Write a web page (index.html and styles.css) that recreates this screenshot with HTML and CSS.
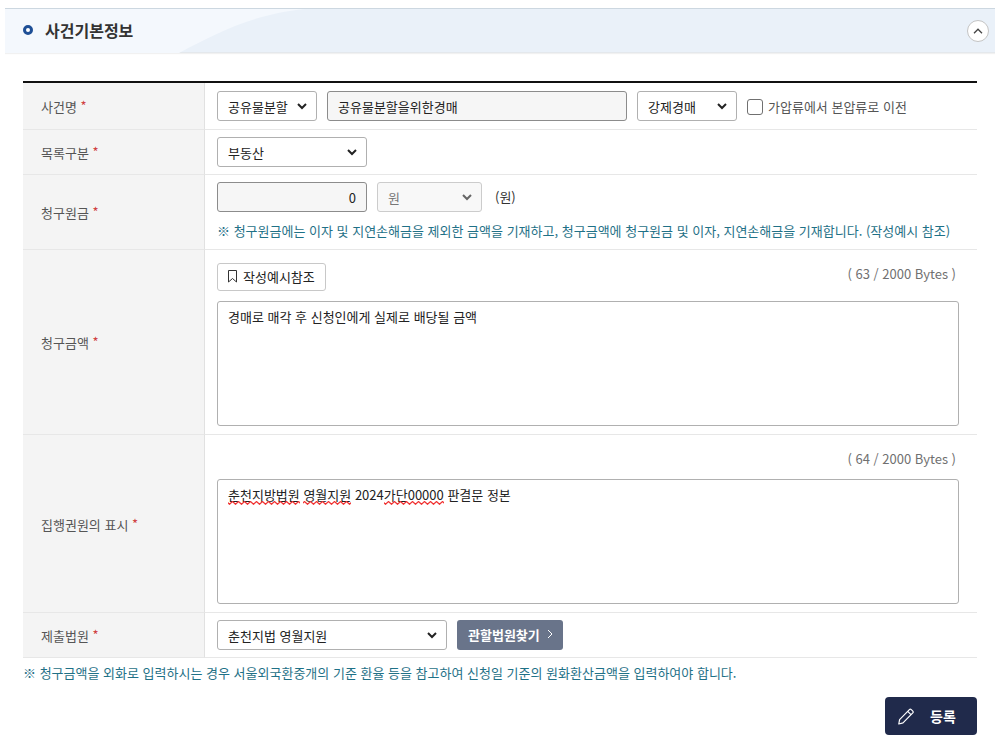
FILE: index.html
```html
<!DOCTYPE html>
<html lang="ko">
<head>
    <meta charset="UTF-8">
    <meta name="viewport" content="width=device-width, initial-scale=1.0">
    <title>사건기본정보</title>
    <link rel="stylesheet" href="styles.css">
</head>
<body>
    <section class="panel">
        <header class="panel-head">
            <svg class="panel-curve" width="300" height="44" viewBox="0 0 300 44" aria-hidden="true">
                <path d="M0 0H300C250 5 215 22 174 44H0Z" fill="#f4f8fd"/>
            </svg>
            <h2 class="panel-title">사건기본정보</h2>
            <button type="button" class="btn-fold" aria-label="접기">
                <svg width="10" height="6" viewBox="0 0 10 6"><path d="M1 5.2L5 1.2L9 5.2" fill="none" stroke="#444" stroke-width="1.3"/></svg>
            </button>
        </header>

        <form class="panel-body">
            <table class="form-table">
                <tr>
                    <th scope="row"><label for="case-type">사건명</label> <span class="req">*</span></th>
                    <td>
                        <div class="row">
                            <select id="case-type" class="w-100"><option>공유물분할</option></select>
                            <input type="text" class="w-300" value="공유물분할을위한경매" aria-label="사건명" readonly>
                            <select class="w-100" aria-label="경매구분"><option>강제경매</option></select>
                            <label class="check"><input type="checkbox">가압류에서 본압류로 이전</label>
                        </div>
                    </td>
                </tr>
                <tr>
                    <th scope="row"><label for="list-type">목록구분</label> <span class="req">*</span></th>
                    <td>
                        <div class="row">
                            <select id="list-type" class="w-150"><option>부동산</option></select>
                        </div>
                    </td>
                </tr>
                <tr>
                    <th scope="row"><label for="principal">청구원금</label> <span class="req">*</span></th>
                    <td>
                        <div class="row">
                            <input type="text" id="principal" class="w-150 num" value="0" readonly>
                            <select class="w-105" aria-label="통화" disabled><option>원</option></select>
                            <span class="unit">(원)</span>
                        </div>
                        <p class="note">※ 청구원금에는 이자 및 지연손해금을 제외한 금액을 기재하고, 청구금액에 청구원금 및 이자, 지연손해금을 기재합니다. (작성예시 참조)</p>
                    </td>
                </tr>
                <tr>
                    <th scope="row"><label for="amount">청구금액</label> <span class="req">*</span></th>
                    <td class="area-cell">
                        <div class="area-top">
                            <button type="button" class="btn-sample">
                                <svg width="9" height="13" viewBox="0 0 9 13"><path d="M.5 .5H8.500V12L4.500 8.500L.5 12Z" fill="none" stroke="#333"/></svg>
                                작성예시참조
                            </button>
                            <span class="bytes">( 63 / 2000 Bytes )</span>
                        </div>
                        <textarea id="amount">경매로 매각 후 신청인에게 실제로 배당될 금액</textarea>
                    </td>
                </tr>
                <tr>
                    <th scope="row"><label for="title-deed">집행권원의 표시</label> <span class="req">*</span></th>
                    <td class="area-cell">
                        <div class="area-top">
                            <span class="bytes">( 64 / 2000 Bytes )</span>
                        </div>
                        <div class="spell">
                            <textarea id="title-deed" spellcheck="false">춘천지방법원 영월지원 2024가단00000 판결문 정본</textarea>
                            <!-- misspelling marks -->
                            <svg class="spell-marks" width="216" height="4" aria-hidden="true">
                                <defs>
                                    <pattern id="wave" width="6" height="4" patternUnits="userSpaceOnUse">
                                        <path d="M-1.500 .5L1.500 3.300L4.500 .5L7.500 3.300" fill="none" stroke="#f03434" stroke-width="1.2"/>
                                    </pattern>
                                </defs>
                                <rect x="0" width="72" height="4" fill="url(#wave)"/>
                                <rect x="75" width="48" height="4" fill="url(#wave)"/>
                                <rect x="156" width="60" height="4" fill="url(#wave)"/>
                            </svg>
                        </div>
                    </td>
                </tr>
                <tr>
                    <th scope="row"><label for="court">제출법원</label> <span class="req">*</span></th>
                    <td>
                        <div class="row">
                            <select id="court" class="w-230"><option>춘천지법 영월지원</option></select>
                            <button type="button" class="btn-court">
                                관할법원찾기
                                <svg width="6" height="10" viewBox="0 0 6 10"><path d="M1 1L5 5L1 9" fill="none" stroke="#fff"/></svg>
                            </button>
                        </div>
                    </td>
                </tr>
            </table>

            <p class="note note-bottom">※ 청구금액을 외화로 입력하시는 경우 서울외국환중개의 기준 환율 등을 참고하여 신청일 기준의 원화환산금액을 입력하여야 합니다.</p>

            <div class="actions">
                <button type="submit" class="btn-submit">
                    <svg width="16" height="17" viewBox="0 0 16 17" fill="none" stroke="#fff" stroke-width="1.200" stroke-linejoin="round">
                        <path d="M.8 16L1.600 11.600L11.400 1.600Q12.300 .7 13.300 1.600L14.800 3.100Q15.600 4 14.800 4.900L5 14.900Z"/>
                        <path d="M9.700 3.300L13 6.600"/>
                    </svg>
                    등록
                </button>
            </div>
        </form>
    </section>
</body>
</html>
```

FILE: styles.css
```css
*,
*::before {
    box-sizing: border-box;
}

body {
    margin: 8px 5px;
    background-color: #fff;
    color: #333;
    font-family: "Noto Sans CJK KR", sans-serif;
    font-size: 13px;
    line-height: 22px;
}

input,
select,
textarea,
button {
    margin: 0;
    font-family: inherit;
    font-size: 13px;
    color: #222;
}

svg {
    flex: none;
}

/* header */
.panel-head {
    position: relative;
    display: flex;
    align-items: center;
    justify-content: space-between;
    height: 45px;
    padding: 0 6px 0 18px;
    border-top: 1px solid #ccd7e0;
    border-bottom: 1px solid #e4e8ec;
    background-color: #eaf1f9;
    box-shadow: 0 1px 1px #f1f1f1;
}

.panel-curve {
    position: absolute;
    left: 0;
    top: 0;
}

.panel-title {
    position: relative;
    display: flex;
    align-items: center;
    gap: 12px;
    margin: 0;
    padding-bottom: 2px;
    font-size: 16px;
    font-weight: 700;
}

.panel-title::before {
    content: "";
    width: 10px;
    height: 10px;
    border: 3px solid #1e4f96;
    border-radius: 50%;
    background-color: #fff;
}

.btn-fold {
    display: flex;
    align-items: center;
    justify-content: center;
    width: 22px;
    height: 22px;
    padding: 0;
    border: 1px solid #c4c4c4;
    border-radius: 50%;
    background-color: #fff;
}

/* table */
.panel-body {
    padding: 28px 18px 0;
}

.form-table {
    width: 100%;
    border-top: 2px solid #111;
    border-spacing: 0;
}

.form-table th {
    width: 182px;
    padding: 2px 18px 0;
    border-right: 1px solid #e1e1e1;
    border-bottom: 1px solid #e7e7e7;
    background-color: #f4f4f4;
    color: #555;
    font-weight: 400;
    text-align: left;
}

.form-table td {
    padding: 7px 18px 7px 12px;
    border-bottom: 1px solid #e7e7e7;
}

.form-table tr:first-child td {
    padding: 8px 18px 8px 12px;
}

.form-table .area-cell {
    padding-bottom: 8px;
}

.req {
    color: #d04040;
    vertical-align: 1px;
    line-height: 1;
}

.row {
    display: flex;
    align-items: center;
    gap: 10px;
}

select,
input[type="text"] {
    height: 30px;
    padding: 0 10px;
    border: 1px solid #b0b0b0;
    border-radius: 3px;
    background-color: #fff;
}

select {
    appearance: none;
    background-image: url("data:image/svg+xml,%3Csvg xmlns='http://www.w3.org/2000/svg' width='10' height='7'%3E%3Cpath d='M1 1L5 5L9 1' fill='none' stroke='%23222' stroke-width='2'/%3E%3C/svg%3E");
    background-repeat: no-repeat;
    background-position: right 9px center;
}

select:disabled {
    border-color: #ccc;
    background-color: #f8f8f8;
    background-image: url("data:image/svg+xml,%3Csvg xmlns='http://www.w3.org/2000/svg' width='10' height='7'%3E%3Cpath d='M1 1L5 5L9 1' fill='none' stroke='%23666' stroke-width='2'/%3E%3C/svg%3E");
    color: #777;
    opacity: 1;
}

input[readonly] {
    border-color: #8c8c8c;
    background-color: #f6f6f6;
}

.num {
    text-align: right;
}

.w-100 { width: 100px; }
.w-105 { width: 105px; }
.w-150 { width: 150px; }
.w-230 { width: 230px; }
.w-300 { width: 300px; }

.check {
    display: flex;
    align-items: center;
    gap: 5px;
    padding-top: 2px;
    color: #555;
}

.check input {
    appearance: none;
    width: 16px;
    height: 16px;
    border: 1px solid #707070;
    border-radius: 3px;
    background-color: #fff;
}

.unit {
    padding-left: 3px;
}

.note {
    margin: 8px 0 0;
    color: #1f7187;
}

.note-bottom {
    margin-top: 4px;
}

.area-top {
    display: flex;
    align-items: flex-start;
    padding: 6px 3px 10px 0;
}

.bytes {
    margin-left: auto;
    color: #707070;
    line-height: 21px;
}

textarea {
    display: block;
    width: 100%;
    height: 125px;
    padding: 4px 10px;
    border: 1px solid #b0b0b0;
    border-radius: 3px;
    line-height: 22px;
    resize: none;
}

.spell {
    position: relative;
}

.spell-marks {
    position: absolute;
    left: 11px;
    top: 22px;
    pointer-events: none;
}

/* buttons */
.btn-sample {
    display: flex;
    align-items: center;
    gap: 6px;
    height: 28px;
    padding: 0 10px 2px;
    border: 1px solid #c8c8c8;
    border-radius: 3px;
    background-color: #fff;
}

.btn-court {
    display: flex;
    align-items: center;
    gap: 7px;
    height: 30px;
    padding: 0 10px 2px 11px;
    border: none;
    border-radius: 3px;
    background-color: #69748a;
    color: #fff;
    font-weight: 700;
}

.actions {
    display: flex;
    justify-content: flex-end;
    margin-top: 13px;
}

.btn-submit {
    display: flex;
    align-items: center;
    gap: 16px;
    width: 92px;
    height: 38px;
    padding: 0 13px;
    border: none;
    border-radius: 4px;
    background-color: #202a4b;
    color: #fff;
    font-size: 14px;
    font-weight: 700;
}
```
